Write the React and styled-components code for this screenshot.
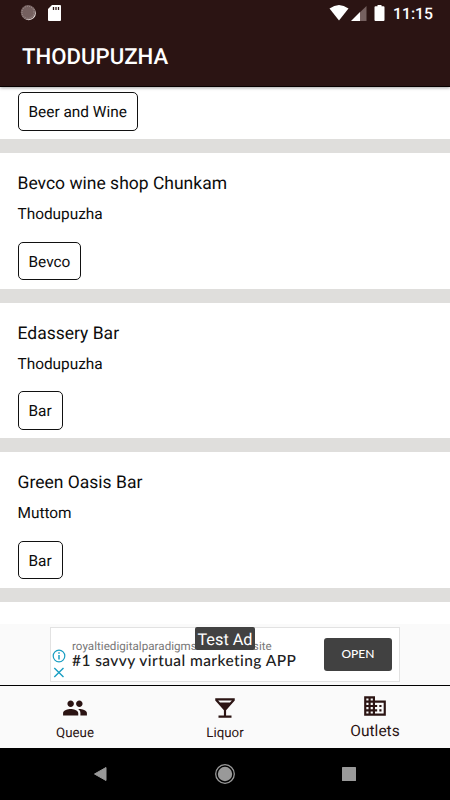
import styled, { createGlobalStyle } from "styled-components";
import { MdBusiness, MdLocalBar, MdPeople } from "react-icons/md";

const GlobalStyle = createGlobalStyle`
  * {
    box-sizing: border-box;
  }
  body {
    margin: 0;
    font-family: Roboto, sans-serif;
    text-rendering: geometricPrecision;
    color: #0c0c0c;
    background: #fff;
  }
`

const Screen = styled.div`
  display: flex;
  flex-direction: column;
  width: 450px;
  height: 800px;
  overflow: hidden;
`

const Header = styled.header`
  flex: 0 0 87px;
  background: #2b1413;
  color: #fff;
  border-bottom: 1px solid #080000;
  box-shadow: 0 1px 3px rgba(0, 0, 0, 0.35);
  z-index: 1;
`

const StatusBar = styled.div`
  display: flex;
  justify-content: space-between;
  height: 27px;
  padding: 0 17px 0 20px;
`

const StatusIcons = styled.div`
  display: flex;
  align-items: center;
`

const Clock = styled.span`
  width: 40px;
  margin-left: 7px;
  font-size: 15.8px;
  font-weight: 500;
  line-height: 28px;
  white-space: nowrap;
`

const Title = styled.h1`
  margin: 0;
  padding: 1px 22px 0;
  font-size: 22.2px;
  font-weight: 500;
  line-height: 58px;
`

const List = styled.main`
  flex: 0 0 537px;
  display: flex;
  flex-direction: column;
  overflow: hidden;
`

const Card = styled.section`
  flex: 0 0 ${({ $partial }) => ($partial ? 66 : 149.5)}px;
  padding: ${({ $partial }) => ($partial ? 5 : 20)}px 17.5px 0;
  border-bottom: 14px solid #dfdedc;
`

const Name = styled.h2`
  margin: 0;
  font-size: 17.5px;
  font-weight: 400;
  line-height: 23px;
`

const Place = styled.p`
  margin: 8.3px 0 16.5px;
  font-size: 15.4px;
  line-height: 21px;
`

const Chip = styled.span`
  display: inline-block;
  height: 38.5px;
  padding: 0 10px;
  border: 1px solid #111;
  border-radius: 5px;
  font-size: 15.4px;
  line-height: 38px;
`

const AdArea = styled.aside`
  flex: 0 0 61px;
  display: flex;
  justify-content: center;
  padding-top: 3px;
  background: #fafafa;
`

const Ad = styled.div`
  position: relative;
  display: flex;
  align-items: center;
  width: 350px;
  height: 55px;
  padding: 0 7px 0 1px;
  border: 1px solid #e2e2e2;
  background: #fff;
`

const AdChoices = styled.svg`
  flex: 0 0 14px;
  align-self: flex-end;
  margin-bottom: 2px;
`

const AdCopy = styled.div`
  flex: 1;
  padding: 0 0 1px 6px;
  white-space: nowrap;
`

const AdSite = styled.div`
  font-size: 11.6px;
  line-height: 13px;
  letter-spacing: 0.03px;
  color: #777;
`

const AdHeadline = styled.div`
  font-family: Lato, sans-serif;
  font-size: 15.5px;
  font-weight: 500;
  line-height: 16px;
  letter-spacing: 0.43px;
  color: #202020;
`

const AdBadge = styled.div`
  position: absolute;
  top: -1px;
  left: 144px;
  width: 60px;
  height: 23px;
  border-radius: 2px;
  background: #424242;
  color: #fff;
  font-size: 16.3px;
  line-height: 25px;
  text-align: center;
  white-space: nowrap;
`

const OpenButton = styled.button`
  width: 68px;
  height: 33px;
  padding: 0 0 2px;
  border: 0;
  border-radius: 3px;
  background: #414141;
  color: #fff;
  font-family: Lato, sans-serif;
  font-size: 12px;
  font-weight: 500;
`

const Tabs = styled.nav`
  flex: 0 0 63px;
  display: grid;
  grid-template-columns: repeat(3, 1fr);
  border-top: 1px solid #000;
  background: #fafafa;
`

const Tab = styled.div`
  display: flex;
  flex-direction: column;
  align-items: center;
  padding-top: ${({ $active }) => ($active ? 7 : 9)}px;
  font-size: ${({ $active }) => ($active ? 15.5 : 13.3)}px;
  line-height: 21px;
  color: #2b1413;

  svg {
    flex: none;
    margin-bottom: 2px;
  }
`

const SystemNav = styled.footer`
  flex: 0 0 52px;
  display: flex;
  justify-content: space-between;
  align-items: center;
  padding: 0 90px 0 89px;
  background: #000;
`

const outlets = [
  { id: 1, type: "Beer and Wine" },
  { id: 2, name: "Bevco wine shop Chunkam", place: "Thodupuzha", type: "Bevco" },
  { id: 3, name: "Edassery Bar", place: "Thodupuzha", type: "Bar" },
  { id: 4, name: "Green Oasis Bar", place: "Muttom", type: "Bar" },
];

const tabs = [
  { label: "Queue", Icon: MdPeople },
  { label: "Liquor", Icon: MdLocalBar },
  { label: "Outlets", Icon: MdBusiness, active: true },
];

function Status() {
  return (
    <StatusBar>
      <StatusIcons>
        <svg width="46" height="27" viewBox="0 0 46 27">
          <circle cx="8.7" cy="13" r="7.2" fill="#eee4e2" />
          <circle cx="8" cy="12.3" r="7.2" fill="#75605f" />
          <circle cx="8" cy="12.3" r="6" fill="none" stroke="#a49594" strokeDasharray="1 1.2" />
          <path d="M32 5h8q1 0 1 1v14q0 1-1 1H29q-1 0-1-1V9z" fill="#fff" />
          <path d="M33.5 7v3M36 7v3M38.5 7v3" stroke="#2b1413" strokeWidth="1.3" />
        </svg>
      </StatusIcons>
      <StatusIcons>
        <svg width="57" height="27" viewBox="0 0 57 27">
          <path d="M.5 8.5Q10 1.5 19.5 8.5L10 20.5z" fill="#fff" />
          <path d="M37.5 6v15H31V12.3z" fill="#75605f" />
          <path d="M22 21l9-9v9z" fill="#fff" />
          <path d="M48.5 5h4v1.3h2q1 0 1 1V20q0 1-1 1h-8q-1 0-1-1V7.3q0-1 1-1h2z" fill="#fff" />
        </svg>
        <Clock>11:15</Clock>
      </StatusIcons>
    </StatusBar>
  );
}

function AdBanner() {
  return (
    <AdArea>
      <Ad>
        <AdChoices width="14" height="30" viewBox="0 0 14 30" fill="none" stroke="#1a9ec2">
          <circle cx="7" cy="7" r="5.8" strokeWidth="1.2" />
          <path d="M7 6v4.5M7 3.3v1.5" strokeWidth="1.5" />
          <path d="M2.3 19l9.2 9M11.5 19l-9.2 9" strokeWidth="1.4" />
        </AdChoices>
        <AdCopy>
          <AdSite>royaltiedigitalparadigms.новоmlm.site</AdSite>
          <AdHeadline>#1 savvy virtual marketing APP</AdHeadline>
        </AdCopy>
        <OpenButton>OPEN</OpenButton>
        <AdBadge>Test Ad</AdBadge>
      </Ad>
    </AdArea>
  );
}

export default function App() {
  return (
    <Screen>
      <GlobalStyle />
      <Header>
        <Status />
        <Title>THODUPUZHA</Title>
      </Header>
      <List>
        {outlets.map(o => (
          <Card key={o.id} $partial={!o.name}>
            {o.name && <Name>{o.name}</Name>}
            {o.place && <Place>{o.place}</Place>}
            <Chip>{o.type}</Chip>
          </Card>
        ))}
      </List>
      <AdBanner />
      <Tabs>
        {tabs.map(({ label, Icon, active }) => (
          <Tab key={label} $active={active}>
            <Icon size={26} />
            {label}
          </Tab>
        ))}
      </Tabs>
      <SystemNav>
        <svg width="22" height="22" viewBox="0 0 22 22">
          <path d="M5.5 11L17 4.5v13z" fill="#999" stroke="#999" strokeLinejoin="round" />
        </svg>
        <svg width="22" height="22" viewBox="0 0 22 22">
          <circle cx="11" cy="11" r="9.3" fill="none" stroke="#999" strokeWidth="1.3" />
          <circle cx="11" cy="11" r="7.2" fill="#999" />
        </svg>
        <svg width="22" height="22" viewBox="0 0 22 22">
          <rect x="4" y="4" width="14" height="14" rx="0.5" fill="#999" />
        </svg>
      </SystemNav>
    </Screen>
  );
}
